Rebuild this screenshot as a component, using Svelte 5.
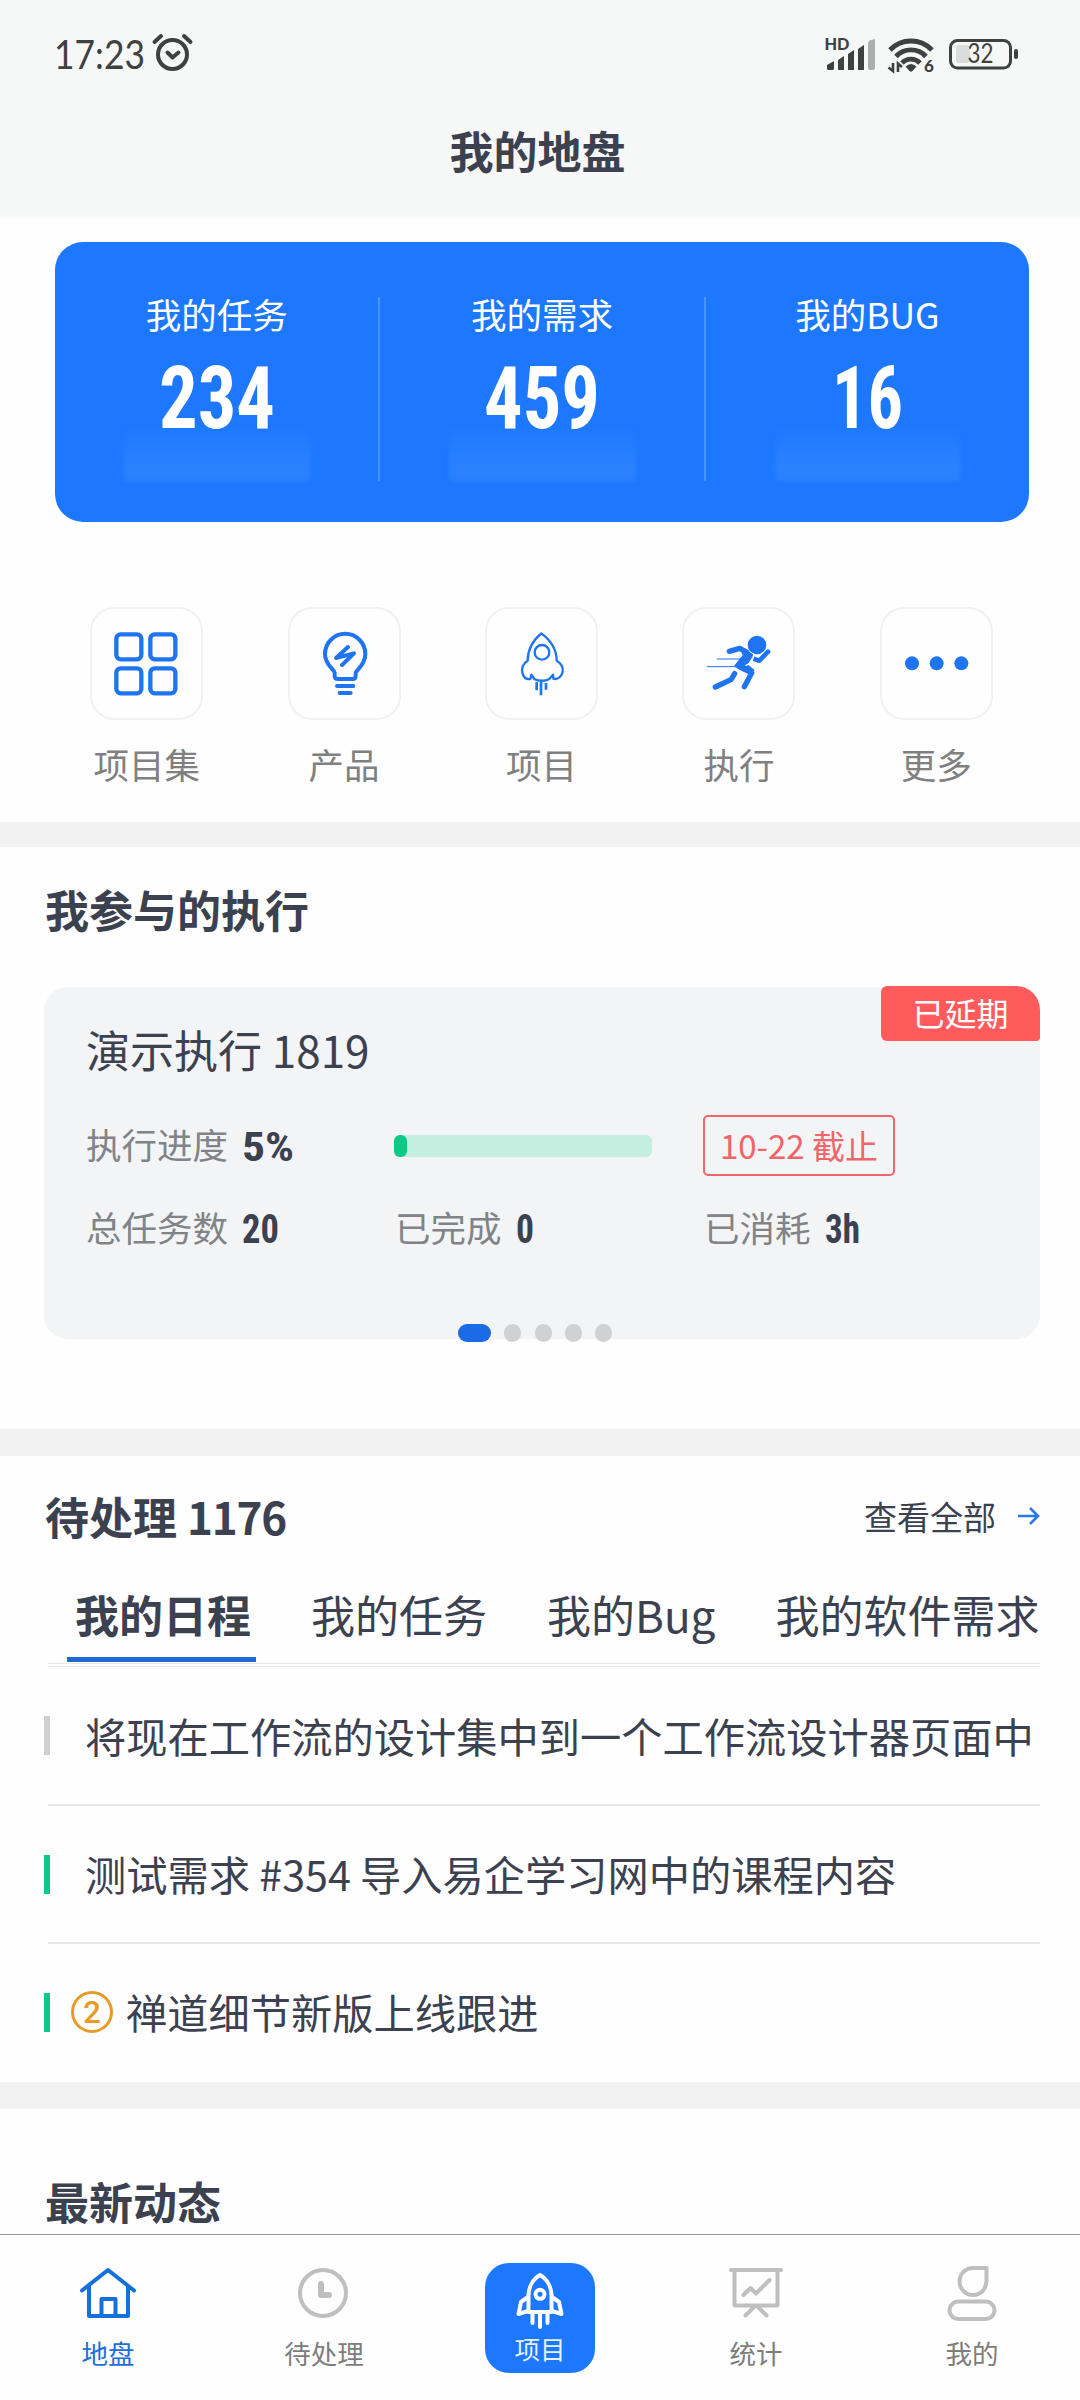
<script>
  const stats = [
    { label: '我的任务', value: '234', width: 116 },
    { label: '我的需求', value: '459', width: 116 },
    { label: '我的BUG', value: '16', width: 71 }
  ];
  const shortcuts = [
    { label: '项目集', icon: 'grid' },
    { label: '产品', icon: 'bulb' },
    { label: '项目', icon: 'rocket' },
    { label: '执行', icon: 'runner' },
    { label: '更多', icon: 'more' }
  ];
  const tabs = ['我的日程', '我的任务', '我的Bug', '我的软件需求'];
  const todos = [
    { text: '将现在工作流的设计集中到一个工作流设计器页面中', done: false },
    { text: '测试需求 #354 导入易企学习网中的课程内容', done: true },
    { text: '禅道细节新版上线跟进', done: true, level: 2 }
  ];
  const progress = 5;
</script>

<!-- Condensed figures: the text is fitted to the given width -->
{#snippet figure(text, width, size)}
  <svg class="figure" width={width} height={size * 0.78}>
    <text x="0" y={size * 0.745} font-size={size} textLength={width} lengthAdjust="spacingAndGlyphs">{text}</text>
  </svg>
{/snippet}

{#snippet shortcutIcon(name)}
  {#if name === 'grid'}
    <svg class="line" viewBox="97 53 333 333" stroke-width="13">
      <rect x="173" y="132" width="75" height="75" rx="13" />
      <rect x="275" y="132" width="75" height="75" rx="13" />
      <rect x="173" y="234" width="75" height="75" rx="13" />
      <rect x="275" y="234" width="75" height="75" rx="13" />
    </svg>
  {:else if name === 'bulb'}
    <svg class="line" viewBox="686 53 333 333" stroke-width="12">
      <path d="M823 247C820 235 794 224 794 191a60 60 0 0 1 121 0c0 33-24 44-29 56v10q0 9-9 9h-44q-10 0-10-9z" />
      <path d="M863 170L827 203L881 189L845 224" />
      <path d="M830 287h49M838 308h33" />
    </svg>
  {:else if name === 'rocket'}
    <svg class="line" viewBox="18 23 333 333" stroke-width="7">
      <path d="M184 99C160 119 143 148 143 181C129 189 122 206 128 221C132 232 141 238 151 236L154 223L163 236C174 243 197 243 208 236L219 223L220 235C234 239 246 228 248 214C250 200 242 188 230 181C230 148 211 119 184 99z" />
      <circle cx="186" cy="156" r="22" />
      <path stroke-width="8" stroke-linecap="butt" d="M170 245v25M183 245v40M198 248v20" />
    </svg>
  {:else if name === 'runner'}
    <svg class="line" viewBox="612 23 333 333" stroke-width="16">
      <circle class="solid" cx="834" cy="134" r="20" />
      <path stroke-width="3" d="M715 176h76M685 199h88" />
      <path d="M751 153L782 144L803 155" />
      <path class="solid" stroke-width="5" d="M783 139L821 164L803 193L824 210L794 211L768 197L794 165z" />
      <path d="M782 199L818 218L796 259" />
      <path d="M767 220L756 238L709 260" stroke-linecap="round" />
      <path stroke-width="14" d="M826 176L841 181L867 154" />
      <path class="gap" stroke-width="4" d="M824 160q1 24-23 35M758 202l20 11" />
    </svg>
  {:else}
    <svg class="line" viewBox="1024 53 333 333" stroke-width="0">
      <circle class="solid" cx="1117" cy="219" r="21" />
      <circle class="solid" cx="1191" cy="219" r="21" />
      <circle class="solid" cx="1265" cy="219" r="21" />
    </svg>
  {/if}
{/snippet}

<div class="screen">
  <header>
    <div class="status">
      <div class="clock">
        <svg width="88" height="32">
          <text x="-2" y="31" font-size="40.5" textLength="91" lengthAdjust="spacingAndGlyphs">17:23</text>
        </svg>
        <svg class="alarm" width="40" height="38" viewBox="0 0 40 38">
          <circle cx="20.5" cy="21.5" r="14.5" stroke-width="4" />
          <path stroke-width="4" d="M15.500 19.500l5 5l6-5" />
          <path stroke-width="4" d="M2.500 9L9 3M32 3l6.500 6" />
        </svg>
      </div>
      <svg class="signals" width="196" height="44" viewBox="0 0 196 44">
        <text class="hd" x="0.500" y="18" textLength="25" lengthAdjust="spacingAndGlyphs">HD</text>
        <path d="M4 38q-1 0-1-2v-3l7-4v7q0 2-1 2zM14 38V28l6-4v14zM24 38V22l6-4v20zM34 38V17l6-4v25z" />
        <path class="faint" d="M44 36V11q0-3 7-4v29q0 2-2 2h-3q-2 0-2-2z" />
        <g class="waves">
          <path d="M66 18a29 29 0 0 1 42 0" />
          <path d="M72 24.5a20.5 20.5 0 0 1 30 0" />
          <path d="M78 31a12.5 12.5 0 0 1 18 0" />
        </g>
        <path d="M81.500 34.500q5.500-5 11 0L88.500 39q-1.500 1.300-3 0z" />
        <path class="arrows" d="M69 31v8l-4.500-3.500M74 40v-8.500l4 3.500" />
        <text class="gen" x="100" y="40">6</text>
        <rect class="charge" x="132" y="13" width="14" height="18" rx="3" />
        <rect class="shell" x="126.500" y="8.500" width="60" height="27.500" rx="7" />
        <rect x="190" y="17" width="4" height="10" rx="2" />
        <text class="level" x="143.500" y="31" textLength="26" lengthAdjust="spacingAndGlyphs">32</text>
      </svg>
    </div>
    <h1>我的地盘</h1>
  </header>

  <section class="overview">
    <div class="summary">
      {#each stats as stat}
        <div class="stat">
          <span class="stat-label">{stat.label}</span>
          {@render figure(stat.value, stat.width, 88)}
        </div>
      {/each}
    </div>
    <div class="shortcuts">
      {#each shortcuts as item}
        <div class="shortcut">
          <div class="tile">{@render shortcutIcon(item.icon)}</div>
          <span>{item.label}</span>
        </div>
      {/each}
    </div>
  </section>

  <section class="executions">
    <h2>我参与的执行</h2>
    <div class="card">
      <span class="tag">已延期</span>
      <h3>演示执行 1819</h3>
      <div class="row first">
        <div class="cell"><span>执行进度</span>{@render figure('5%', 52, 41)}</div>
        <div class="cell"><div class="track"><div class="fill" style:width="{progress}%"></div></div></div>
        <div class="cell"><span class="deadline">10-22 截止</span></div>
      </div>
      <div class="row second">
        <div class="cell"><span>总任务数</span>{@render figure('20', 37, 41)}</div>
        <div class="cell"><span>已完成</span>{@render figure('0', 18, 41)}</div>
        <div class="cell"><span>已消耗</span>{@render figure('3h', 35, 41)}</div>
      </div>
      <div class="dots"><i class="on"></i><i></i><i></i><i></i><i></i></div>
    </div>
  </section>

  <section class="pending">
    <div class="heading">
      <h2>待处理 <span class="count">1176</span></h2>
      <span class="all">查看全部
        <svg width="24" height="22" viewBox="0 0 24 22"><path d="M2 11h20M14 3l8 8l-8 8" /></svg>
      </span>
    </div>
    <div class="tabs">
      {#each tabs as tab, i}
        <span class="tab" class:active={i === 0}>{tab}</span>
      {/each}
    </div>
    <ul>
      {#each todos as todo}
        <li class:done={todo.done}>
          {#if todo.level}<b>{todo.level}</b>{/if}
          <span>{todo.text}</span>
        </li>
      {/each}
    </ul>
  </section>

  <section class="news"><h2>最新动态</h2></section>

  <nav>
    <div class="item current">
      <svg width="60" height="60" viewBox="0 0 60 60">
        <path d="M4 27.500L30 7L56 27.500M11 23v30h39V23M23.500 53V36h14v17" />
      </svg>
      <span>地盘</span>
    </div>
    <div class="item">
      <svg width="60" height="60" viewBox="0 0 60 60">
        <circle cx="29" cy="30" r="23" />
        <path stroke-width="6" d="M27 21v11h8" />
      </svg>
      <span>待处理</span>
    </div>
    <div class="item">
      <div class="project">
        <svg width="60" height="60" viewBox="25 8 60 60">
          <path d="M43.500 49V33C43.500 24 48 16 55 12C62 16 66.500 24 66.500 33V49z" />
          <circle cx="55" cy="31.300" r="4.500" />
          <path d="M43 34L36 39L33.500 51L43 48M67 34L74 39L76.500 51L67 48" />
          <path d="M47.500 51v9M55 51v13M62.500 51v9" />
        </svg>
        <span>项目</span>
      </div>
    </div>
    <div class="item">
      <svg width="60" height="60" viewBox="0 0 60 60">
        <path d="M5 7h50M8.500 8v34.500h43V8M17.500 32l7-7l5.500 5.500L43.500 17M28 44l-8.500 8.500M32 44l8.500 8.500" />
      </svg>
      <span>统计</span>
    </div>
    <div class="item">
      <svg width="60" height="60" viewBox="0 0 60 60">
        <path d="M44.500 5H31a13.500 13.500 0 1 0 0 27C39 32 44.500 26 44.500 17z" />
        <rect x="7.500" y="38.500" width="45" height="17.500" rx="8.750" />
      </svg>
      <span>我的</span>
    </div>
  </nav>
</div>

<style>
  :global(body) { margin: 0; background: #fefefe; }
  .screen {
    width: 1080px;
    height: 2400px;
    overflow: hidden;
    box-sizing: border-box;
    background: #fefefe;
    color: #3c4150;
    font-family: "Noto Sans CJK SC", sans-serif;
    white-space: nowrap;
  }
  h1, h2, h3 { margin: 0; font-size: 44px; line-height: 60px; font-weight: 700; }
  svg { display: block; flex: none; }

  header { height: 216px; background: #f6f7f7; box-shadow: 0 0 5px #f6f7f7; }
  .status {
    height: 108px;
    display: flex;
    align-items: center;
    justify-content: space-between;
    padding: 0 60px 0 56px;
    font-family: Lato, sans-serif;
  }
  .clock { display: flex; align-items: center; gap: 8px; }
  .clock svg { fill: #3f4040; overflow: visible; }
  .clock .alarm { fill: none; stroke: #3f4040; stroke-linecap: round; stroke-linejoin: round; margin-bottom: 4px; }
  .signals { fill: #3f4040; }
  .signals .hd { font-size: 17px; font-weight: 900; }
  .signals .gen { font-size: 17px; font-weight: 900; }
  .signals .level { font-size: 26px; }
  .signals .faint { fill: #adaeae; }
  .signals .waves { fill: none; stroke: #3f4040; stroke-width: 4.8px; }
  .signals .arrows { fill: none; stroke: #3f4040; stroke-width: 2.6px; }
  .signals .charge { fill: #dbdddd; }
  .signals .shell { fill: none; stroke: #3f4040; stroke-width: 3px; }
  h1 { line-height: 84px; text-align: center; padding-right: 5px; }
  h2 { padding-left: 1px; }

  .figure { overflow: visible; fill: #3c4150; font-family: Roboto, sans-serif; font-weight: 700; font-stretch: 75%; }

  .overview { height: 606px; box-sizing: border-box; padding-top: 26px; }
  .summary {
    height: 280px;
    margin: 0 51px 0 55px;
    box-sizing: border-box;
    padding: 55px 0 41px;
    display: flex;
    border-radius: 28px;
    background: #1d78ff;
    color: #fff;
  }
  .stat {
    position: relative;
    flex: 1;
    display: flex;
    flex-direction: column;
    align-items: center;
    border-right: 2px solid #4a94ff;
  }
  .stat:last-child { border-right: 0; }
  .stat::before {
    content: "";
    position: absolute;
    left: 69px;
    right: 68px;
    bottom: 0;
    height: 58px;
    background: linear-gradient(#1d78ff, #2b81ff 75%);
    filter: blur(2px);
  }
  .stat-label { font-size: 35.500px; line-height: 34px; margin-bottom: 31px; }
  .stat .figure { position: relative; fill: #fff; }

  .shortcuts { display: flex; margin: 85px 45px 0 48px; }
  .shortcut { flex: 1; display: flex; flex-direction: column; align-items: center; color: #808080; font-size: 35.500px; line-height: 40px; }
  .tile { width: 113px; height: 113px; box-sizing: border-box; border: 2px solid #f0f1f3; border-radius: 24px; margin-bottom: 24px; }
  .tile svg { width: 111px; height: 111px; margin: -1px; }
  .line { fill: none; stroke: #1f74f2; stroke-linecap: round; stroke-linejoin: round; }
  .line .solid { fill: #1f74f2; }
  .line .gap { stroke: #fefefe; }

  .executions { height: 607px; box-sizing: border-box; border-top: 25px solid #f2f2f2; padding: 32px 40px 0 44px; }
  .card {
    position: relative;
    height: 352px;
    margin-top: 48px;
    box-sizing: border-box;
    padding: 32px 0 0 42px;
    border-radius: 24px;
    background: #f3f4f5;
  }
  .tag {
    position: absolute;
    top: -1px;
    right: 0;
    width: 159px;
    height: 55px;
    border-radius: 6px 24px 4px 6px;
    background: #ff5b5d;
    color: #fff;
    font-size: 32px;
    line-height: 53px;
    text-align: center;
  }
  h3 { font-weight: 400; }
  .row { display: grid; grid-template-columns: 309px 309px 1fr; align-items: center; color: #808388; font-size: 35.500px; }
  .first { height: 61px; margin-top: 36px; }
  .second { height: 50px; margin-top: 27px; }
  .cell { display: flex; align-items: center; gap: 14px; }
  .cell span { line-height: 50px; margin-top: -3px; }
  .track { width: 258px; height: 22px; margin-left: -1px; border-radius: 6px; background: #c4eee0; }
  .fill { height: 22px; border-radius: 6px; background: #0dc986; }
  .cell .deadline {
    width: 192px;
    height: 61px;
    box-sizing: border-box;
    margin: 0 0 0 -1px;
    border: 2px solid #ee656a;
    border-radius: 5px;
    color: #ee656a;
    font-size: 33px;
    line-height: 56px;
    text-align: center;
  }
  .dots { display: flex; gap: 13.300px; margin: 71px 0 0 372px; }
  .dots i { width: 17px; height: 18px; border-radius: 9px; background: #cfd1d3; }
  .dots .on { width: 33px; background: #1b6ae6; }

  .pending { height: 653px; box-sizing: border-box; border-top: 27px solid #f2f2f2; padding: 30px 40px 0 44px; }
  .heading { display: flex; justify-content: space-between; }
  .count { letter-spacing: -1.200px; }
  .all { display: flex; align-items: center; gap: 20px; font-size: 33px; line-height: 60px; }
  .all svg { fill: none; stroke: #2b78ee; stroke-width: 2.600px; }
  .tabs {
    display: flex;
    gap: 60px;
    height: 79px;
    margin: 38px 0 0 4px;
    padding-left: 27px;
    border-bottom: 4px double #e9e9e9;
    font-size: 44px;
    line-height: 60px;
  }
  .tab.active {
    height: 73px;
    margin: 0 -5px 0 -8px;
    padding: 0 5px 0 8px;
    border-bottom: 5px solid #1f68d5;
    font-weight: 700;
  }
  ul { list-style: none; margin: 0; padding: 0; }
  li {
    display: flex;
    align-items: center;
    height: 138px;
    background: linear-gradient(#e9e9e9, #e9e9e9) 4px 100% / 100% 2px no-repeat;
    font-size: 41.250px;
  }
  li:first-child { height: 139px; }
  li:last-child { background: none; }
  li::before { content: ""; width: 6px; height: 39px; margin-bottom: 2px; background: #cfcfcf; }
  li.done::before { background: #0dc986; }
  li span { margin: 0 0 4px 35px; }
  b {
    width: 42px;
    height: 42px;
    box-sizing: border-box;
    margin: 0 0 2px 21px;
    border: 3px solid #e89a26;
    border-radius: 50%;
    color: #e89a26;
    font: 500 31px/37px Roboto, sans-serif;
    text-align: center;
  }
  b + span { margin-left: 13px; }

  .news { height: 152px; box-sizing: border-box; border-top: 27px solid #f2f2f2; padding: 62px 44px 0; }

  nav { height: 166px; box-sizing: border-box; border-top: 1px solid #939494; display: flex; }
  .item { flex: 1; display: flex; flex-direction: column; align-items: center; padding-top: 28px; color: #7d7d7d; font-size: 26.500px; line-height: 36px; }
  .item svg { fill: none; stroke: #bfbfbf; stroke-width: 4px; stroke-linejoin: round; stroke-linecap: round; margin-bottom: 12px; }
  .item.current { color: #1d6fd8; }
  .item.current svg { stroke: #1470dc; }
  .project {
    width: 110px;
    height: 110px;
    display: flex;
    flex-direction: column;
    align-items: center;
    border-radius: 24px;
    background: #1d78ff;
    color: #e6f1ff;
    font-size: 25.500px;
  }
  .project svg { stroke: #fff; margin: 8px 0 -1px; }
</style>
